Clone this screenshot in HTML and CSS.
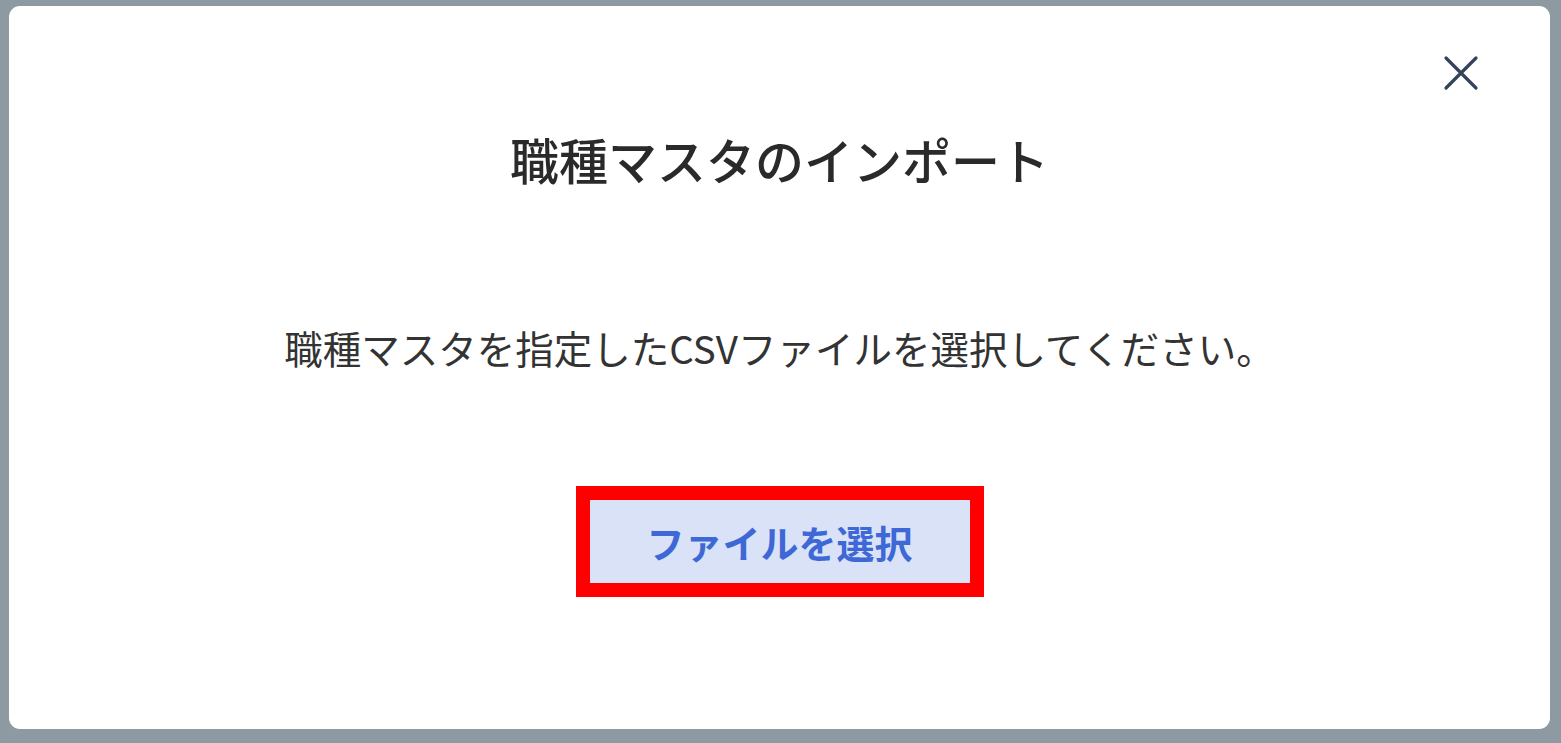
FILE: index.html
```html
<!DOCTYPE html>
<html lang="ja">

<head>
    <meta charset="UTF-8">
    <meta name="viewport" content="width=device-width, initial-scale=1.0">
    <title>職種マスタのインポート</title>
    <link rel="stylesheet" href="styles.css">
</head>

<body>
    <div class="overlay">
        <div class="modal">
            <button class="closeButton" aria-label="閉じる">
                <svg width="36" height="36" viewBox="0 0 36 36">
                    <path d="M3 3 L33 33 M33 3 L3 33" stroke="#34435a" stroke-width="3.2" stroke-linecap="round" fill="none"/>
                </svg>
            </button>

            <h1 class="modalTitle">職種マスタのインポート</h1>

            <p class="modalText">職種マスタを指定したCSVファイルを選択してください。</p>

            <div class="buttonFrame">
                <button class="selectButton">ファイルを選択</button>
            </div>
        </div>
    </div>
</body>

</html>
```

FILE: styles.css
```css
html,
body {
    margin: 0;
    height: 100%;
}

body {
    background-color: #8e9aa1;
    font-family: "Noto Sans CJK JP", "Noto Sans", sans-serif;
}

.overlay {
    box-sizing: border-box;
    height: 743px;
    padding: 6px 11px 14px 9px;
}

.modal {
    position: relative;
    box-sizing: border-box;
    height: 100%;
    background-color: #ffffff;
    border-radius: 11px;
    display: flex;
    flex-direction: column;
    align-items: center;
    padding-top: 125px;
}

.closeButton {
    position: absolute;
    top: 49px;
    right: 71px;
    background: none;
    border: none;
    padding: 0;
    width: 36px;
    height: 36px;
    cursor: pointer;
}

.modalTitle {
    margin: 0;
    font-size: 49px;
    line-height: 56px;
    font-weight: 500;
    color: #2a2a2a;
}

.modalText {
    margin: 135px 0 0 0;
    font-size: 38.5px;
    line-height: 50px;
    color: #333333;
}

.buttonFrame {
    margin-top: 114px;
    border: 14px solid #ff0000;
}

.selectButton {
    display: block;
    width: 380px;
    height: 83px;
    border: none;
    background-color: #dae2f8;
    color: #3d68d6;
    font-family: "Noto Sans CJK JP", "Noto Sans", sans-serif;
    font-size: 38px;
    font-weight: bold;
    cursor: pointer;
}
```
